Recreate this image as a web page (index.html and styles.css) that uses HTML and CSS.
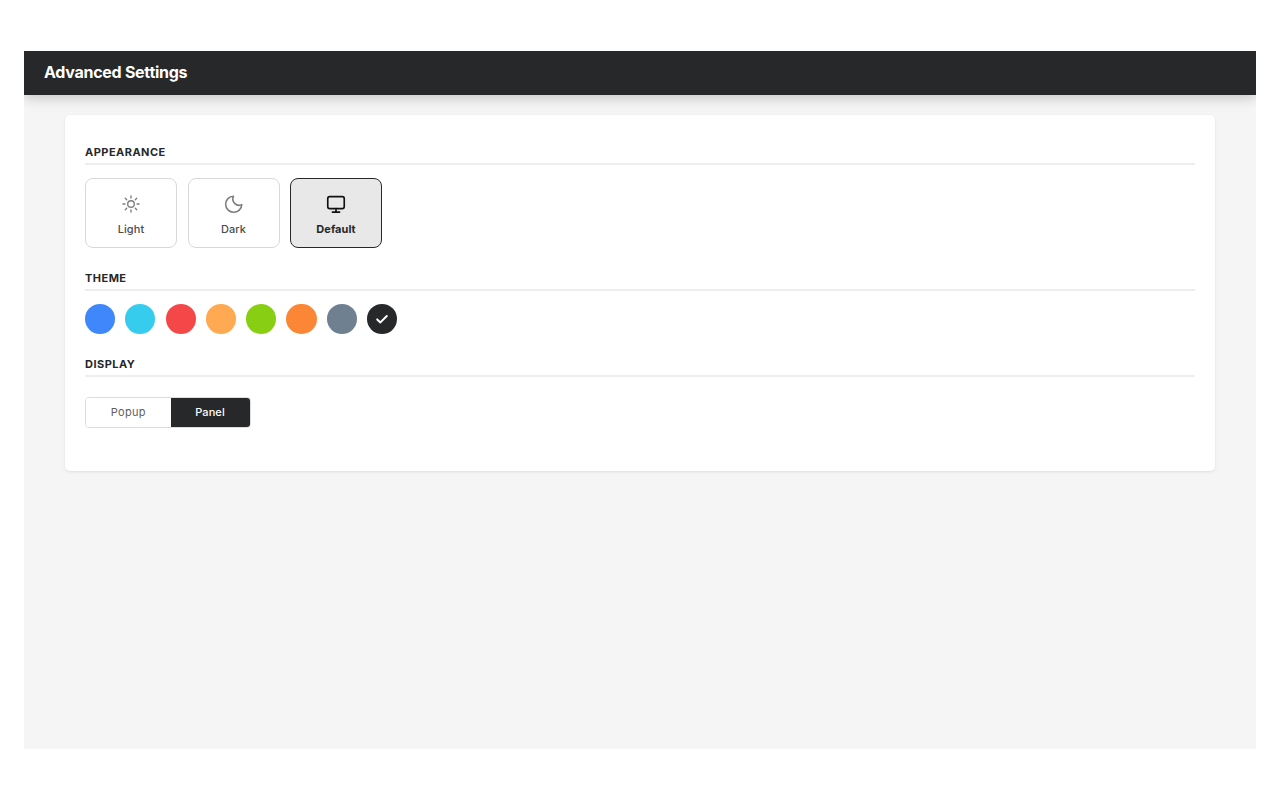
FILE: index.html
```html
<!DOCTYPE html>
<html lang="en">
<head>
<meta charset="utf-8">
<title>Advanced Settings</title>
<link rel="stylesheet" href="styles.css">
</head>
<body>
<div class="window">
  <header class="topbar"><h1 class="topbar-title">Advanced Settings</h1></header>
  <main class="content">
    <section class="card">
      <h2 class="section-title">APPEARANCE</h2>
      <div class="modes">
        <button class="mode">
          <svg class="mode-icon" viewBox="0 0 24 24" fill="none" stroke="currentColor" stroke-width="1.5" stroke-linecap="round"><circle cx="12" cy="12" r="3.6"/><path d="M12 3.2v2.2M12 18.6v2.2M3.2 12h2.2M18.6 12h2.2M5.8 5.8l1.5 1.5M16.7 16.7l1.5 1.5M5.8 18.2l1.5-1.5M16.7 7.3l1.5-1.5"/></svg>
          <span>Light</span>
        </button>
        <button class="mode">
          <svg class="mode-icon" viewBox="0 0 24 24" fill="none" stroke="currentColor" stroke-width="1.7" stroke-linecap="round" stroke-linejoin="round"><path d="M11.5 3.5a6.8 6.8 0 0 0 9 9.2A8.8 8.8 0 1 1 11.5 3.5z"/></svg>
          <span>Dark</span>
        </button>
        <button class="mode mode-active">
          <svg class="mode-icon" viewBox="0 0 24 24" fill="none" stroke="currentColor" stroke-width="1.8" stroke-linecap="round" stroke-linejoin="round"><rect x="3" y="4" width="18" height="13" rx="2.2"/><path d="M12 17v3.6M8 20.8h8"/></svg>
          <span>Default</span>
        </button>
      </div>
      <h2 class="section-title">THEME</h2>
      <div class="swatches">
        <span class="swatch swatch-blue"></span>
        <span class="swatch swatch-cyan"></span>
        <span class="swatch swatch-red"></span>
        <span class="swatch swatch-peach"></span>
        <span class="swatch swatch-green"></span>
        <span class="swatch swatch-orange"></span>
        <span class="swatch swatch-slate"></span>
        <span class="swatch swatch-dark">
          <svg class="check" viewBox="0 0 14 14" fill="none" stroke="currentColor" stroke-width="2" stroke-linecap="round" stroke-linejoin="round"><path d="M2.2 7.4l3.2 3L11.8 4"/></svg>
        </span>
      </div>
      <h2 class="section-title">DISPLAY</h2>
      <div class="segments">
        <button class="segment">Popup</button>
        <button class="segment segment-active">Panel</button>
      </div>
    </section>
  </main>
</div>
</body>
</html>
```

FILE: styles.css
```css
* { box-sizing: border-box; }
html, body { margin: 0; height: 100%; }
body {
  background: #fff;
  padding: 51px 24px;
  font-family: Inter, "Liberation Sans", sans-serif;
  color: #27282a;
}
.window {
  height: 698px;
  background: #f5f5f5;
  display: flex;
  flex-direction: column;
  overflow: hidden;
}
.topbar {
  height: 44px;
  flex: none;
  background: #27282a;
  padding: 0 20px 2px;
  display: flex;
  align-items: center;
  box-shadow: 0 3px 12px rgba(0, 0, 0, 0.2);
  position: relative;
}
.topbar-title {
  margin: 0;
  font-size: 16px;
  font-weight: 700;
  color: #fff;
  letter-spacing: -0.27px;
}
.content { padding: 20px 41px; }
.card {
  height: 356px;
  background: #fff;
  border-radius: 5px;
  padding: 30px 20px 0;
  box-shadow: 0 1px 3px rgba(0, 0, 0, 0.1);
}
.section-title {
  margin: 0;
  height: 20px;
  font-size: 11px;
  line-height: 15px;
  font-weight: 700;
  letter-spacing: 0.47px;
  color: #27282a;
  border-bottom: 2px solid #eeeeee;
}
.modes {
  display: flex;
  gap: 10.5px;
  margin-top: 13px;
  margin-bottom: 23px;
}
.mode {
  width: 92px;
  height: 70px;
  background: #fff;
  border: 1px solid #d8d8d8;
  border-radius: 8px;
  padding: 14px 0 0;
  display: flex;
  flex-direction: column;
  align-items: center;
  font-family: inherit;
  font-size: 11px;
  font-weight: 500;
  color: #7d7d7d;
}
.mode span { color: #4c4c4c; margin-top: 7px; line-height: 14px; letter-spacing: 0.05px; }
.mode-icon { width: 22px; height: 22px; display: block; }
.mode-active {
  background: #e8e8e8;
  border-color: #27282a;
  color: #111;
}
.mode-active span { color: #27282a; font-weight: 700; }
.swatches {
  display: flex;
  gap: 10.1px;
  margin-top: 13px;
  margin-bottom: 23px;
}
.swatch {
  width: 30.2px;
  height: 30px;
  border-radius: 50%;
  display: flex;
  align-items: center;
  justify-content: center;
}
.swatch-blue { background: #3f88fb; }
.swatch-cyan { background: #36ccee; }
.swatch-red { background: #f44848; }
.swatch-peach { background: #ffa952; }
.swatch-green { background: #88ce12; }
.swatch-orange { background: #fb8635; }
.swatch-slate { background: #6f8091; }
.swatch-dark { background: #27282a; color: #fff; }
.check { width: 14px; height: 14px; display: block; }
.segments {
  display: flex;
  width: 165.5px;
  height: 31px;
  margin-top: 20px;
  border: 1px solid #dcdcdc;
  border-radius: 4px;
  overflow: hidden;
}
.segment {
  flex: 1 1 0;
  border: 0;
  padding: 0 0 2px;
  background: #fff;
  font-family: inherit;
  font-size: 11px;
  font-weight: 400;
  letter-spacing: 0.3px;
  color: #5f5f5f;
}
.segment-active {
  flex: 0 0 79px;
  background: #27282a;
  color: #fff;
  font-weight: 500;
  letter-spacing: 0.1px;
}
```
